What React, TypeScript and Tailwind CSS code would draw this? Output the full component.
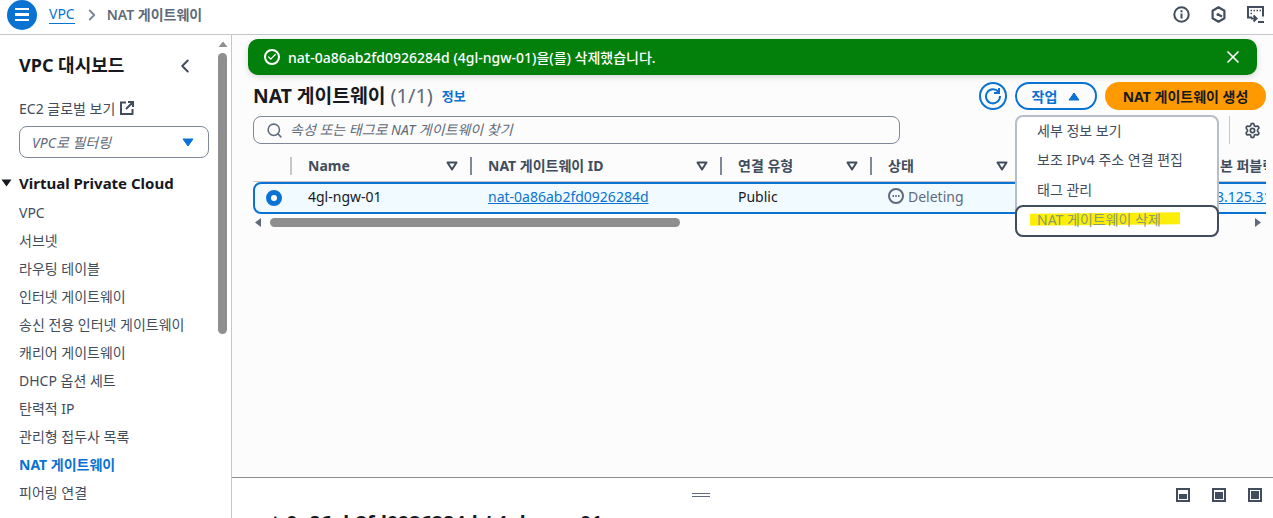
import { Check, ChevronLeft, ChevronRight, Search, Settings, X } from "lucide-react";

const font = { fontFamily: '"Noto Sans", "Noto Sans CJK KR", sans-serif' };

const navItems = [
  "VPC",
  "서브넷",
  "라우팅 테이블",
  "인터넷 게이트웨이",
  "송신 전용 인터넷 게이트웨이",
  "캐리어 게이트웨이",
  "DHCP 옵션 세트",
  "탄력적 IP",
  "관리형 접두사 목록",
  "NAT 게이트웨이",
  "피어링 연결",
];

const columns = [
  { label: "Name", width: "w-[180px]" },
  { label: "NAT 게이트웨이 ID", width: "w-[250px]" },
  { label: "연결 유형", width: "w-[150px]" },
  { label: "상태", width: "w-[150px]" },
];

function SortIcon() {
  return (
    <svg width="12" height="10" viewBox="0 0 12 10" className="shrink-0">
      <path d="M1.500 1.500h9L6 8.500z" fill="none" stroke="#414d5c" strokeWidth="2" strokeLinejoin="round" />
    </svg>
  );
}

function TopBar() {
  return (
    <header className="h-[35px] shrink-0 flex items-center border-b border-[#c6c6cd] bg-white">
      <div className="ml-[7px] w-[30px] h-[30px] -mt-[5px] rounded-full bg-[#0972d3] flex flex-col items-center justify-center gap-[3px]">
        <span className="w-[14px] h-[2.500px] bg-white" />
        <span className="w-[14px] h-[2.500px] bg-white" />
        <span className="w-[14px] h-[2.500px] bg-white" />
      </div>
      <a className="ml-[12px] -mt-[5px] text-[14px] leading-[18px] text-[#0972d3] border-b border-[#0972d3]">VPC</a>
      <ChevronRight className="ml-[8px] -mt-[5px] text-[#7d8998]" size={18} strokeWidth={2.5} />
      <span className="ml-[6px] -mt-[5px] text-[14px] font-semibold text-[#5f6b7a]">NAT 게이트웨이</span>
      <div className="ml-auto mr-[9px] -mt-[5px] flex items-center gap-[21px] text-[#414d5c]">
        <svg width="17" height="17" viewBox="0 0 17 17" fill="none">
          <circle cx="8.500" cy="8.500" r="7.200" stroke="#414d5c" strokeWidth="2" />
          <path d="M7.500 7.500h2v5h-2zM7.500 4.200h2v2h-2z" fill="#414d5c" />
        </svg>
        <svg width="15" height="17" viewBox="0 0 15 17" fill="none" stroke="#414d5c" strokeWidth="2.200">
          <path d="M7.500 1.300l5.900 3.400v7.600l-5.900 3.400-5.900-3.400V4.700z" strokeLinejoin="round" />
          <circle cx="7" cy="8.500" r="1.500" fill="#414d5c" stroke="none" />
          <path d="M7 8.500l4 2" />
        </svg>
        <svg width="17" height="17" viewBox="0 0 17 17" fill="none" stroke="#414d5c" strokeWidth="2">
          <path d="M5 11.500H1V1h15v9.500" />
          <path d="M3.500 4.500h1.500M6.500 4.500h1.500M9.500 4.500h1.500M12.500 4.500h1.500M3.500 7.500h1.500" strokeWidth="1.500" />
          <path d="M4 12.500h5M6.500 9.500l3 3-3 3M11 16h6" />
        </svg>
      </div>
    </header>
  );
}

function Sidebar() {
  return (
    <aside className="relative w-[232px] shrink-0 border-r border-[#c6c6cd] bg-white overflow-hidden">
      <div className="pl-[19px] pr-[23px]">
        <div className="h-[60px] flex items-center justify-between pt-[1px]">
          <span className="text-[18px] font-bold text-[#16191f]">VPC 대시보드</span>
          <ChevronLeft className="mr-[12px] text-[#414d5c]" size={22} strokeWidth={2.200} />
        </div>
        <div className="mt-[3px] h-[20px] flex items-center gap-[5px] text-[14px] text-[#414d5c]">
          EC2 글로벌 보기
          <svg width="14" height="14" viewBox="0 0 14 14" fill="none" stroke="#414d5c" strokeWidth="2">
            <path d="M6 1.500H1v11.500h11.500V8M8 1h5v5M13 1L6 8" />
          </svg>
        </div>
        <div className="mt-[8px] h-[32px] w-[190px] flex items-center justify-between rounded-lg border border-[#7d8998] pl-[12px] pr-[14px]">
          <span className="text-[14px] italic text-[#5f6b7a]">VPC로 필터링</span>
          <svg width="12" height="9" viewBox="0 0 12 9">
            <path d="M1 1h10L6 8z" fill="#0972d3" stroke="#0972d3" strokeLinejoin="round" />
          </svg>
        </div>
      </div>
      <div className="mt-[15px] h-[20px] flex items-center text-[15px] font-bold text-[#16191f]">
        <svg width="12" height="9" viewBox="0 0 12 9" className="ml-[1px] mr-[6px]">
          <path d="M0.500 0.500h10L5.500 7.500z" fill="#16191f" />
        </svg>
        Virtual Private Cloud
      </div>
      <nav className="mt-[5px] pl-[19px]">
        {navItems.map((item) => (
          <div
            key={item}
            className={
              item === "NAT 게이트웨이"
                ? "h-[28px] flex items-center text-[14px] font-bold text-[#0972d3]"
                : "h-[28px] flex items-center text-[14px] text-[#414d5c]"
            }
          >
            {item}
          </div>
        ))}
      </nav>
      {/* nav scrollbar */}
      <div className="absolute right-[4px] top-[18px] w-[9px] h-[281px] rounded-full bg-[#8f8f8f]" />
      <svg width="10" height="6" viewBox="0 0 10 6" className="absolute right-[3px] top-[6px]">
        <path d="M0.500 6L5 0.500 9.500 6z" fill="#8f8f8f" />
      </svg>
    </aside>
  );
}

function Flash() {
  return (
    <div className="mx-[16px] mt-[4px] h-[36px] rounded-[10px] bg-[#037f0c] flex items-center pl-[16px] pr-[14px] text-white shadow-[0_2px_6px_rgba(0,0,0,0.15)]">
      <span className="w-[16px] h-[16px] rounded-full border-2 border-white flex items-center justify-center">
        <Check size={10} strokeWidth={3} />
      </span>
      <span className="ml-[8px] text-[14px] font-medium">nat-0a86ab2fd0926284d (4gl-ngw-01)을(를) 삭제했습니다.</span>
      <X className="ml-auto" size={20} strokeWidth={2} />
    </div>
  );
}

function ActionMenu() {
  return (
    <div className="absolute left-[783px] top-[40px] w-[204px] h-[122px] rounded-lg bg-white border-2 border-[#b6bec9] z-10">
      <div className="h-[27px] pl-[20px] flex items-center text-[14px] text-[#414d5c]">세부 정보 보기</div>
      <div className="h-[30px] pl-[20px] flex items-center text-[14px] text-[#414d5c]">보조 IPv4 주소 연결 편집</div>
      <div className="h-[30px] pl-[20px] flex items-center text-[14px] text-[#414d5c]">태그 관리</div>
      <div className="absolute -left-[2px] -right-[2px] -bottom-[2px] h-[32px] rounded-lg border-2 border-[#414d5c] bg-white flex items-center pl-[20px] pb-[4px]">
        <span className="absolute left-[13px] top-[6px] w-[150px] h-[12px] bg-[#fcee09] -rotate-[0.5deg]" />
        <span className="relative text-[14px] text-[#8d9b6b]">NAT 게이트웨이 삭제</span>
      </div>
    </div>
  );
}

function TablePanel() {
  return (
    <div className="flex-1 min-h-0 relative">
      <div className="h-[42px] pl-[21px] pr-[7px] flex items-center">
        <h1 className="text-[19.300px] font-bold text-[#16191f]">NAT 게이트웨이</h1>
        <span className="ml-[5px] text-[20px] text-[#5f6b7a]">(1/1)</span>
        <span className="ml-[9px] mt-[2px] text-[13px] font-bold text-[#0972d3]">정보</span>
        <button className="ml-auto w-[28px] h-[28px] rounded-full border-2 border-[#0972d3] flex items-center justify-center text-[#0972d3]">
          <svg width="18" height="18" viewBox="0 0 18 18" fill="none" stroke="#0972d3" strokeWidth="2">
            <path d="M14.500 5A7 7 0 1 0 16 9" />
            <path d="M15 1v5h-5" />
          </svg>
        </button>
        <button className="ml-[8px] w-[82px] h-[28px] rounded-full border-2 border-[#0972d3] flex items-center justify-center gap-[11px] text-[14px] font-bold text-[#0972d3]">
          작업
          <svg width="12" height="9" viewBox="0 0 12 9">
            <path d="M1 8h10L6 1z" fill="#0972d3" stroke="#0972d3" strokeLinejoin="round" />
          </svg>
        </button>
        <button className="ml-[8px] w-[161px] h-[28px] rounded-full bg-[#ff9900] text-[14px] font-bold text-[#16191f]">
          NAT 게이트웨이 생성
        </button>
      </div>

      <div className="pl-[21px] pr-[6px] h-[28px] mt-[-1px] flex items-center">
        <div className="w-[647px] h-[28px] rounded-lg border border-[#7d8998] flex items-center pl-[12px]">
          <Search size={17} strokeWidth={2.200} className="text-[#5f6b7a]" />
          <span className="ml-[7px] -mt-[2px] text-[14px] italic text-[#5f6b7a]">속성 또는 태그로 NAT 게이트웨이 찾기</span>
        </div>
        <div className="ml-auto flex items-center">
          <span className="w-px h-[28px] bg-[#c6c6cd] mr-[14px]" />
          <Settings size={17} strokeWidth={2.400} className="text-[#414d5c] mr-[6px]" />
        </div>
      </div>

      <div className="mt-[10px] ml-[21px] mr-[7px] pb-[4px] flex h-[28px] items-center text-[14px] font-bold text-[#414d5c] border-b border-[#c6c6cd] overflow-hidden whitespace-nowrap">
        <div className="w-[39px] h-[18px] shrink-0 border-r-2 border-[#c6c6cd]" />
        {columns.map((col) => (
          <div key={col.label} className={`${col.width} h-[18px] shrink-0 flex items-center justify-between pl-[16px] pr-[12px] border-r-2 border-[#7d8998]`}>
            {col.label}
            <SortIcon />
          </div>
        ))}
        <div className="pl-[185px]">기본 퍼블릭 IPv4</div>
      </div>

      <div className="ml-[21px] mr-[7px] h-[32px] overflow-hidden">
        <div className="w-[1040px] h-[32px] pb-[4px] flex items-center rounded-lg border-2 border-[#0972d3] bg-[#f1faff] text-[14px] text-[#16191f] whitespace-nowrap">
          <div className="w-[38px] shrink-0 pl-[11px] mt-[3px]">
            <span className="block w-[16px] h-[16px] rounded-full border-[5px] border-[#0972d3] bg-white" />
          </div>
          <div className="w-[180px] shrink-0 pl-[16px] -ml-[1px]">4gl-ngw-01</div>
          <div className="w-[250px] shrink-0 pl-[16px]">
            <a className="text-[#0972d3] underline">nat-0a86ab2fd0926284d</a>
          </div>
          <div className="w-[150px] shrink-0 pl-[16px]">Public</div>
          <div className="w-[150px] shrink-0 pl-[16px] flex items-center gap-[4px] text-[#5f6b7a]">
            <svg width="16" height="16" viewBox="0 0 16 16" fill="none">
              <circle cx="8" cy="8" r="7" stroke="#5f6b7a" strokeWidth="2" />
              <path d="M4.500 7h1.500v2h-1.500zM7.250 7h1.500v2h-1.500zM10 7h1.500v2h-1.500z" fill="#5f6b7a" />
            </svg>
            <span>Deleting</span>
          </div>
          <div className="pl-[194px] text-[#0972d3] underline">3.125.31</div>
        </div>
      </div>

      <div className="ml-[23px] mr-[12px] mt-[1px] h-[14px] flex items-center">
        <svg width="6" height="9" viewBox="0 0 6 9"><path d="M6 0v9L0 4.500z" fill="#5f6b7a" /></svg>
        <div className="ml-[9px] w-[410px] h-[9px] rounded-full bg-[#8f8f8f]" />
        <svg width="6" height="9" viewBox="0 0 6 9" className="ml-auto"><path d="M0 0v9l6-4.500z" fill="#5f6b7a" /></svg>
      </div>

      <ActionMenu />
    </div>
  );
}

function SplitPanel() {
  return (
    <div className="relative h-[41px] shrink-0 border-t border-[#8f8f8f] bg-white overflow-hidden">
      <div className="absolute left-[460px] top-[15px] w-[18px] flex flex-col gap-[2px]">
        <span className="h-px bg-[#5f6b7a]" />
        <span className="h-px bg-[#5f6b7a]" />
      </div>
      <div className="absolute right-[11px] top-[10px] flex items-center gap-[22px]">
        <span className="w-[14px] h-[14px] border-2 border-[#414d5c] flex items-end">
          <span className="mx-px mb-px w-full h-[5px] bg-[#414d5c]" />
        </span>
        <span className="w-[14px] h-[14px] border-2 border-[#414d5c] flex items-end">
          <span className="mx-px mb-px w-full h-[7px] bg-[#414d5c]" />
        </span>
        <span className="w-[14px] h-[14px] border-2 border-[#414d5c] p-px">
          <span className="block w-full h-full bg-[#414d5c]" />
        </span>
      </div>
      <div className="absolute left-[15px] top-[30px] text-[19.600px] font-bold text-[#16191f] whitespace-nowrap">
        nat-0a86ab2fd0926284d / 4gl-ngw-01
      </div>
    </div>
  );
}

export default function App() {
  return (
    <div style={font} className="w-[1273px] h-[518px] overflow-hidden flex flex-col bg-white">
      <TopBar />
      <div className="flex-1 min-h-0 flex">
        <Sidebar />
        <main className="flex-1 min-w-0 flex flex-col bg-[#fcfcfc]">
          <Flash />
          <TablePanel />
          <SplitPanel />
        </main>
      </div>
    </div>
  );
}
